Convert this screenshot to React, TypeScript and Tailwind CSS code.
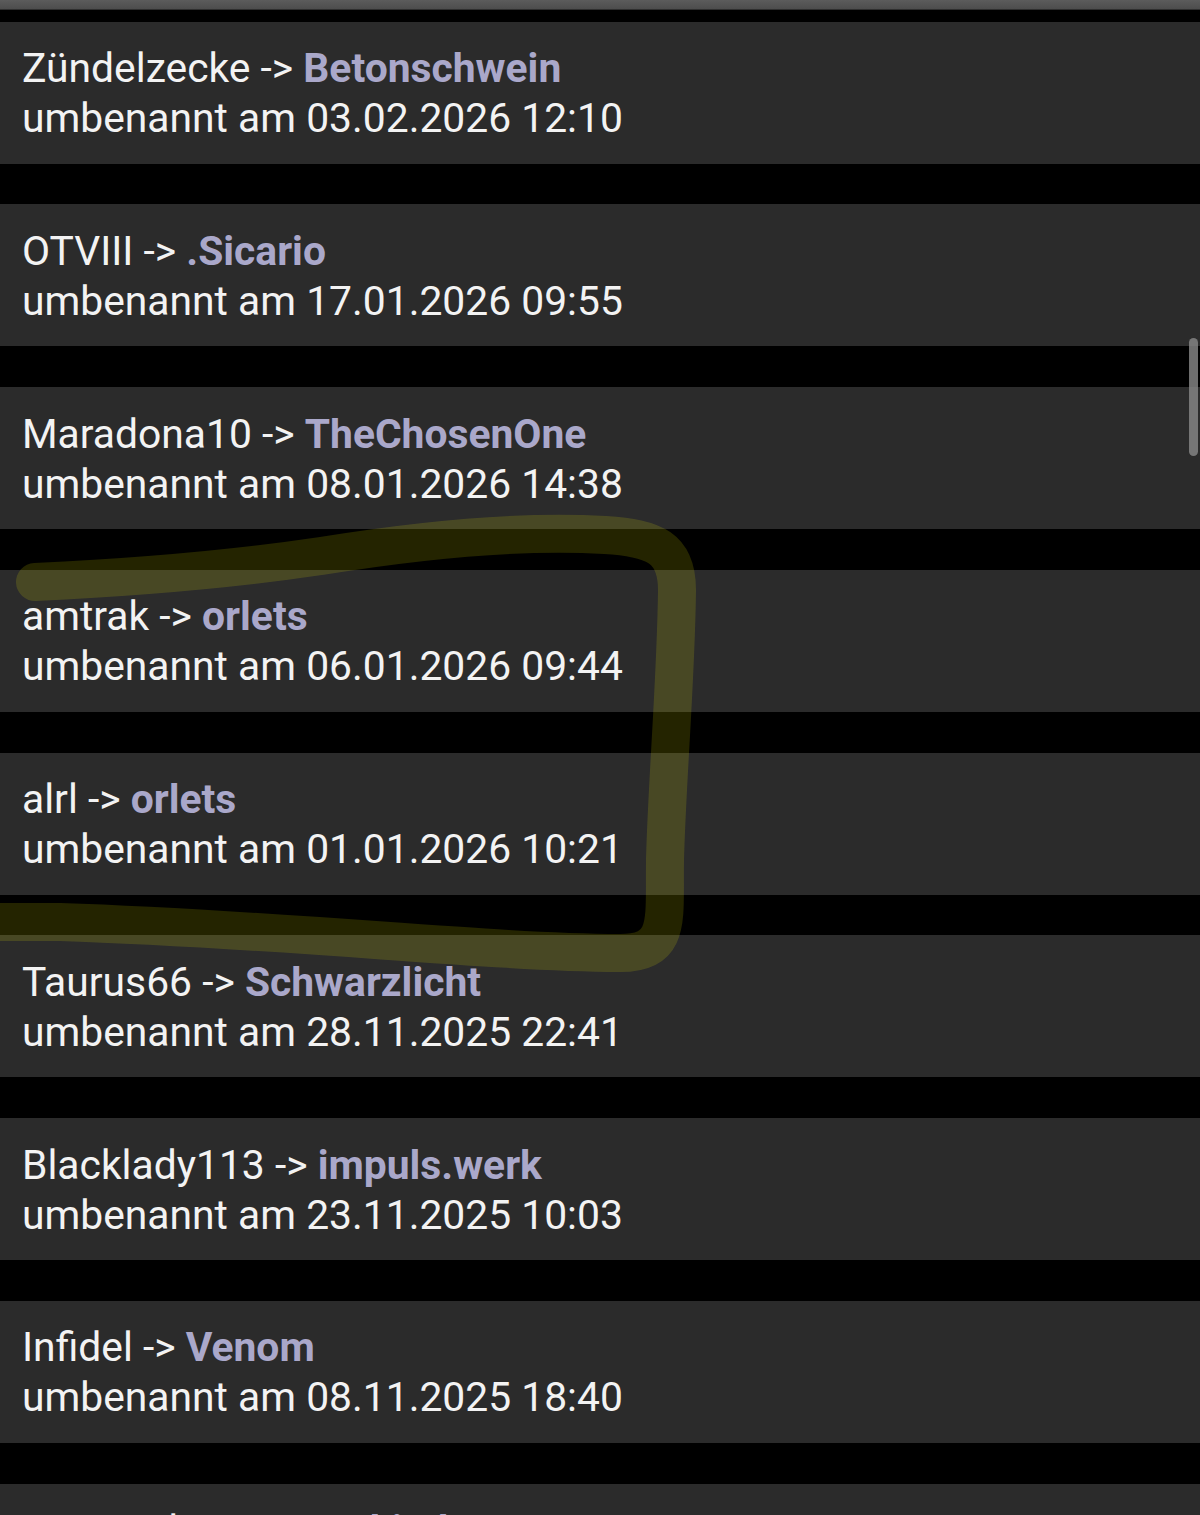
const renames = [
  { from: "Zündelzecke", to: "Betonschwein", date: "03.02.2026 12:10" },
  { from: "OTVIII", to: ".Sicario", date: "17.01.2026 09:55" },
  { from: "Maradona10", to: "TheChosenOne", date: "08.01.2026 14:38" },
  { from: "amtrak", to: "orlets", date: "06.01.2026 09:44" },
  { from: "alrl", to: "orlets", date: "01.01.2026 10:21" },
  { from: "Taurus66", to: "Schwarzlicht", date: "28.11.2025 22:41" },
  { from: "Blacklady113", to: "impuls.werk", date: "23.11.2025 10:03" },
  { from: "Infidel", to: "Venom", date: "08.11.2025 18:40" },
  { from: "emanuel", to: "Sonnenkind", date: "02.11.2025 20:17" },
];

function RenameRow({ from, to, date }: { from: string; to: string; date: string }) {
  return (
    <div className="h-[142px] shrink-0 bg-[#2b2b2b] px-[22px] pt-[21.5px] text-[40.8px] leading-[50px] text-[#f3f3f3]">
      <div className="whitespace-nowrap">
        {from} -&gt; <span className="font-bold text-[#aaa8ca]">{to}</span>
      </div>
      <div className="whitespace-nowrap">umbenannt am {date}</div>
    </div>
  );
}

export default function App() {
  return (
    <div
      className="relative h-[1515px] overflow-hidden bg-black"
      style={{ fontFamily: "Roboto, 'Noto Sans', sans-serif" }}
    >
      <div className="h-[10px] border-b border-[#2f2f2f] bg-gradient-to-b from-[#5c5c5c] to-[#4d4d4d]" />
      <div className="mt-[11.5px] flex flex-col gap-[40.75px]">
        {renames.map((r, i) => (
          <RenameRow key={i} {...r} />
        ))}
      </div>

      {/* scrollbar thumb */}
      <div className="absolute right-[2px] top-[338px] h-[118px] w-[9px] rounded-full bg-[#8a8a8a]/80" />

      {/* hand drawn marker */}
      <svg
        className="pointer-events-none absolute left-0 top-0"
        width="1200"
        height="1515"
        viewBox="0 0 1200 1515"
      >
        <path
          d="M 35 582 C 120 578, 220 571, 321 556 C 420 540, 520 530, 605 535 C 655 538, 677 548, 677 590 C 676 680, 667 780, 665 860 C 664 920, 672 953, 620 953 C 480 952, 300 930, 60 922 L -40 922"
          fill="none"
          stroke="rgba(255,255,0,0.14)"
          strokeWidth="38"
          strokeLinecap="round"
          strokeLinejoin="round"
        />
      </svg>
    </div>
  );
}
